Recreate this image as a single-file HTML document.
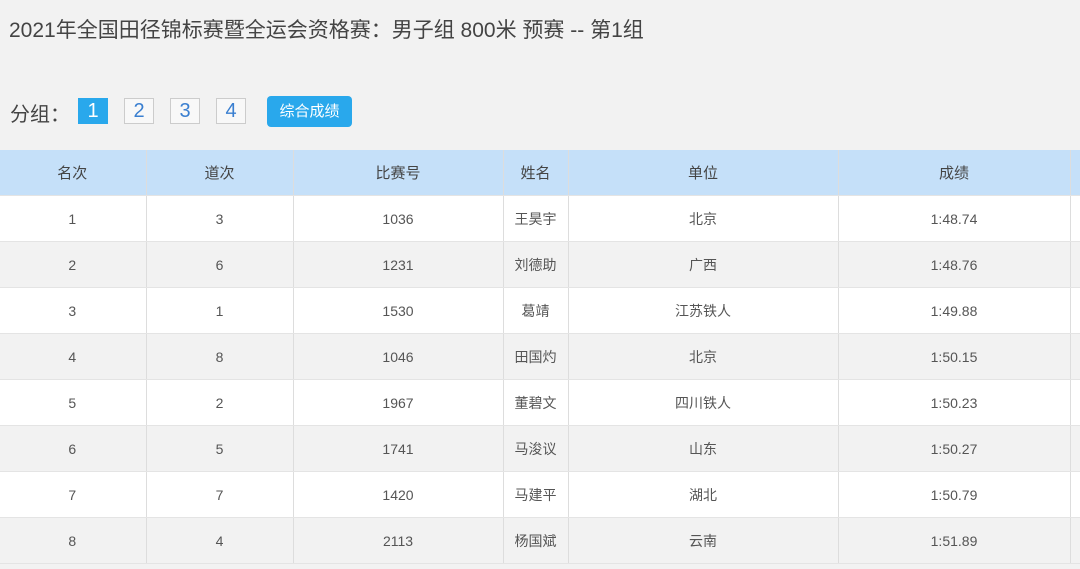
<!DOCTYPE html>
<html><head><meta charset="utf-8"><style>
body{margin:0;width:1080px;height:569px;background:#f2f2f2;font-family:"Liberation Sans","Noto Sans CJK SC",sans-serif;overflow:hidden;position:relative;color:#555}
.t{position:absolute;left:9px;top:14px;font-size:21px;color:#444;white-space:nowrap}
.g{position:absolute;left:10px;top:98px;font-size:20px;color:#444}
.b{position:absolute;top:98px;width:28px;height:24px;border:1px solid #ccc;background:#f8f8f8;color:#3a7fd0;font-size:20px;text-align:center;line-height:24px}
.b.on{background:#29a8ec;border-color:#29a8ec;color:#fff}
.z{position:absolute;left:267px;top:96px;width:85px;height:31px;background:#29a8ec;border-radius:4px;color:#fff;font-size:15px;text-align:center;line-height:31px}
table{position:absolute;left:-1px;top:150px;border-collapse:collapse;table-layout:fixed;width:1091px;font-size:14px;color:#555}
td{height:45px;text-align:center;border-right:1px solid #ddd;border-bottom:1px solid #e4e4e4;padding:0}
tr.h td{background:#c5e0f9;color:#444;font-size:15px}
tr:nth-child(even) td{background:#fff}
tr:nth-child(odd):not(.h) td{background:#f2f2f2}
</style></head><body>
<div class="t">2021年全国田径锦标赛暨全运会资格赛：男子组 800米 预赛 -- 第1组</div>
<div class="g">分组：</div>
<div class="b on" style="left:78px">1</div>
<div class="b" style="left:124px">2</div>
<div class="b" style="left:170px">3</div>
<div class="b" style="left:216px">4</div>
<div class="z">综合成绩</div>
<table>
<colgroup><col style="width:147px"><col style="width:147px"><col style="width:210px"><col style="width:65px"><col style="width:270px"><col style="width:232px"><col style="width:20px"></colgroup>
<tr class="h"><td>名次</td><td>道次</td><td>比赛号</td><td>姓名</td><td>单位</td><td>成绩</td><td></td></tr>
<tr><td>1</td><td>3</td><td>1036</td><td>王昊宇</td><td>北京</td><td>1:48.74</td><td></td></tr>
<tr><td>2</td><td>6</td><td>1231</td><td>刘德助</td><td>广西</td><td>1:48.76</td><td></td></tr>
<tr><td>3</td><td>1</td><td>1530</td><td>葛靖</td><td>江苏铁人</td><td>1:49.88</td><td></td></tr>
<tr><td>4</td><td>8</td><td>1046</td><td>田国灼</td><td>北京</td><td>1:50.15</td><td></td></tr>
<tr><td>5</td><td>2</td><td>1967</td><td>董碧文</td><td>四川铁人</td><td>1:50.23</td><td></td></tr>
<tr><td>6</td><td>5</td><td>1741</td><td>马浚议</td><td>山东</td><td>1:50.27</td><td></td></tr>
<tr><td>7</td><td>7</td><td>1420</td><td>马建平</td><td>湖北</td><td>1:50.79</td><td></td></tr>
<tr><td>8</td><td>4</td><td>2113</td><td>杨国斌</td><td>云南</td><td>1:51.89</td><td></td></tr>
</table>
</body></html>
